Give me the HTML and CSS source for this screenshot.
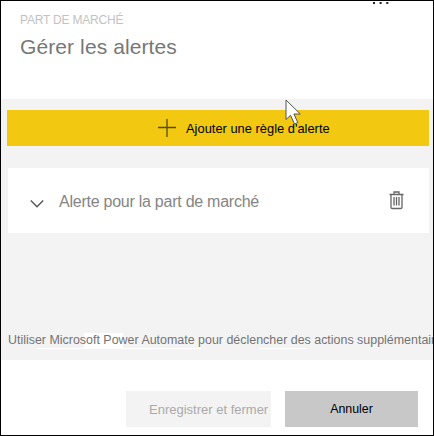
FILE: index.html
```html
<!DOCTYPE html>
<html lang="fr">
<head>
<meta charset="utf-8">
<title>Gérer les alertes</title>
<link rel="stylesheet" href="styles.css">
</head>
<body>
<main class="panel">
  <header class="header">
    <div class="eyebrow">PART DE MARCHÉ</div>
    <h1 class="title">Gérer les alertes</h1>
    <svg class="more" width="18" height="4" viewBox="0 0 18 4"><path d="M1 1h2v2H1zM7.600 1h2v2h-2zM14.300 1h2v2h-2z" fill="#222"/></svg>
  </header>
  <section class="content">
    <button class="add">
      <svg class="plus" width="18" height="18" viewBox="0 0 18 18"><path d="M0 8.500h18M9 0v18" stroke="#59490a" stroke-width="1.300"/></svg>
      <span class="add-label">Ajouter une règle d'alerte</span>
    </button>
    <article class="card">
      <svg class="chevron" width="16" height="10" viewBox="0 0 16 10"><path d="M1.800 1.500L8 7.700L14.200 1.500" fill="none" stroke="#555" stroke-width="1.400"/></svg>
      <span class="card-label">Alerte pour la part de marché</span>
      <svg class="trash" width="15" height="19" viewBox="0 0 15 19" fill="none" stroke="#666" stroke-width="1.300"><path d="M.5 3.500h14M5 3V1h5v2M2 3.500v12.800q0 1.200 1.200 1.200h8.600q1.200 0 1.200-1.200V3.500"/><path d="M5 6v8.500M7.500 6v8.500M10 6v8.500"/></svg>
    </article>
    <p class="note">Utiliser Microsoft Power Automate pour déclencher des actions supplémentair</p>
  </section>
  <footer class="footer">
    <button class="save" disabled>Enregistrer et fermer</button>
    <button class="cancel">Annuler</button>
  </footer>
  <svg class="cursor" width="17" height="27" viewBox="0 0 17 27"><path d="M1 1v19.500l4.500-4.200 4 8.700 3.300-1.500-3.900-8.500h6.400z" fill="#fff" stroke="#555" stroke-width="1"/></svg>
</main>
</body>
</html>
```
FILE: styles.css
```css
* { box-sizing: border-box; }
body { margin: 0; font-family: "Liberation Sans", Arial, sans-serif; }
button { border: 0; padding: 0; font: inherit; border-radius: 0; }
.panel {
  position: relative;
  width: 434px;
  height: 436px;
  border: 1px solid #000;
  background: #fff;
  overflow: hidden;
  white-space: nowrap;
}
.header { height: 98px; padding: 11px 0 0 19px; }
.eyebrow { font-size: 12px; line-height: 16px; letter-spacing: -0.2px; color: #c2c2c2; }
.title { margin: 7px 0 0; font-size: 21px; line-height: 24px; font-weight: 400; letter-spacing: 0.1px; color: #777; }
.more { position: absolute; left: 371px; top: 0; }
.content { height: 261px; padding: 11px 0 0 6px; background: #f3f3f3; }
.add {
  display: flex;
  align-items: center;
  width: 422px;
  height: 36px;
  padding-left: 151px;
  background: #f2c811;
  color: #000;
}
.add-label { margin-left: 10px; font-size: 12.900px; }
.card {
  display: flex;
  align-items: center;
  width: 421px;
  height: 65px;
  margin: 22px 0 0 1px;
  padding: 0 25px 0 21px;
  background: #fff;
}
.chevron { margin-top: 6px; }
.card-label { margin-left: 14px; padding-top: 2px; font-size: 16px; letter-spacing: -0.25px; color: #858585; }
.trash { margin-left: auto; }
.note {
  height: 18px;
  margin: 99px 0 0 1px;
  font-size: 12.450px;
  line-height: 17px;
  color: #737373;
  background:
    linear-gradient(#fff, #fff) 76px 1px / 39px 15px no-repeat,
    linear-gradient(#fff, #fff) 29px 16px / 164px 1px no-repeat,
    linear-gradient(#fff, #fff) 251px 16px / 48px 1px no-repeat;
}
.footer { display: flex; gap: 14px; padding: 31px 0 0 125px; font-size: 12px; }
.save { width: 145px; height: 36px; padding-left: 23px; text-align: left; font-size: 13px; background: #f3f3f3; color: #aaa; }
.cancel { width: 133px; height: 36px; font-size: 12.400px; background: #c8c8c8; color: #000; }
.cursor { position: absolute; left: 284px; top: 98px; }
```
